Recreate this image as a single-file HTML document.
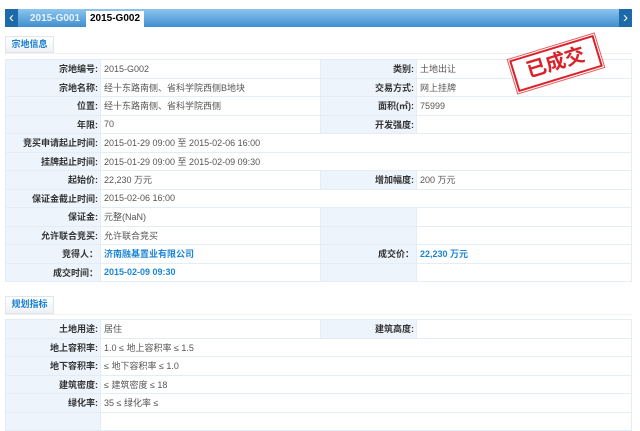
<!DOCTYPE html>
<html><head><meta charset="utf-8"><style>
*{margin:0;padding:0;box-sizing:border-box}
body{width:640px;height:415px;overflow:hidden;background:#fff;font-family:"Liberation Sans","Noto Sans CJK SC",sans-serif;font-size:9px;color:#555;position:relative}
.bar{position:absolute;left:5px;top:9px;width:627px;height:18px;background:linear-gradient(#8cc4ee,#3f8fd0);}
.arr{position:absolute;top:9px;width:13px;height:18px;background:#1e6aa8;color:#fff;font-size:15px;line-height:17px;text-align:center}
.tab{position:absolute;top:11px;height:16px;line-height:16px;font-size:10px;font-weight:bold}
.sec{position:absolute;left:5px;width:49px;height:17px;border:1px solid #e2e6ea;background:linear-gradient(#fff,#eef1f4);color:#1a7fd0;font-size:9px;font-weight:bold;line-height:15px;text-align:center}
.line{position:absolute;left:5px;width:627px;height:1px;background:#eef0f2}
table{position:absolute;left:5px;width:627px;border-collapse:collapse;table-layout:fixed}
td{height:18.5px;border:1px solid #e4ecf6;padding:0 3px;white-space:nowrap;overflow:hidden}
td.l{background:#eef4fc;text-align:right;font-weight:bold;color:#333;padding-right:2px}
.b{color:#1a85d6;font-weight:bold}
</style></head><body>
<div class="bar"></div>
<div class="arr" style="left:5px">&lsaquo;</div>
<div class="arr" style="left:619px">&rsaquo;</div>
<div class="tab" style="left:30px;color:#e8f2fb">2015-G001</div>
<div class="tab" style="left:86px;width:58px;background:#fff;color:#000;text-align:center">2015-G002</div>
<div class="sec" style="top:36px">宗地信息</div>
<div class="line" style="top:53px"></div>
<table style="top:59px">
<colgroup><col style="width:95px"><col style="width:220px"><col style="width:96px"><col></colgroup>
<tr><td class="l">宗地编号:</td><td>2015-G002</td><td class="l">类别:</td><td>土地出让</td></tr>
<tr><td class="l">宗地名称:</td><td>经十东路南侧、省科学院西侧B地块</td><td class="l">交易方式:</td><td>网上挂牌</td></tr>
<tr><td class="l">位置:</td><td>经十东路南侧、省科学院西侧</td><td class="l">面积(㎡):</td><td>75999</td></tr>
<tr><td class="l">年限:</td><td>70</td><td class="l">开发强度:</td><td></td></tr>
<tr><td class="l">竞买申请起止时间:</td><td colspan="3">2015-01-29 09:00 至 2015-02-06 16:00</td></tr>
<tr><td class="l">挂牌起止时间:</td><td colspan="3">2015-01-29 09:00 至 2015-02-09 09:30</td></tr>
<tr><td class="l">起始价:</td><td>22,230 万元</td><td class="l">增加幅度:</td><td>200 万元</td></tr>
<tr><td class="l">保证金截止时间:</td><td colspan="3">2015-02-06 16:00</td></tr>
<tr><td class="l">保证金:</td><td>元整(NaN)</td><td class="l"></td><td></td></tr>
<tr><td class="l">允许联合竞买:</td><td>允许联合竞买</td><td class="l"></td><td></td></tr>
<tr><td class="l">竞得人：</td><td class="b">济南融基置业有限公司</td><td class="l">成交价：</td><td class="b">22,230 万元</td></tr>
<tr><td class="l">成交时间：</td><td class="b">2015-02-09 09:30</td><td class="l"></td><td></td></tr>
</table>
<div class="sec" style="top:296px;height:18px">规划指标</div>
<div class="line" style="top:314px"></div>
<table style="top:319px">
<colgroup><col style="width:95px"><col style="width:220px"><col style="width:96px"><col></colgroup>
<tr><td class="l">土地用途:</td><td>居住</td><td class="l">建筑高度:</td><td></td></tr>
<tr><td class="l">地上容积率:</td><td colspan="3">1.0 ≤ 地上容积率 ≤ 1.5</td></tr>
<tr><td class="l">地下容积率:</td><td colspan="3">≤ 地下容积率 ≤ 1.0</td></tr>
<tr><td class="l">建筑密度:</td><td colspan="3">≤ 建筑密度 ≤ 18</td></tr>
<tr><td class="l">绿化率:</td><td colspan="3">35 ≤ 绿化率 ≤</td></tr>
<tr><td class="l"></td><td colspan="3"></td></tr>
</table>
<div style="position:absolute;left:512px;top:47px;width:88px;height:33px;border:2px solid #d9232a;outline:1px solid #e85a5f;outline-offset:1px;transform:rotate(-17deg);color:#d9232a;font-size:20px;font-weight:bold;text-align:center;line-height:29px;background:rgba(255,255,255,.6)">已成交</div>
</body></html>
